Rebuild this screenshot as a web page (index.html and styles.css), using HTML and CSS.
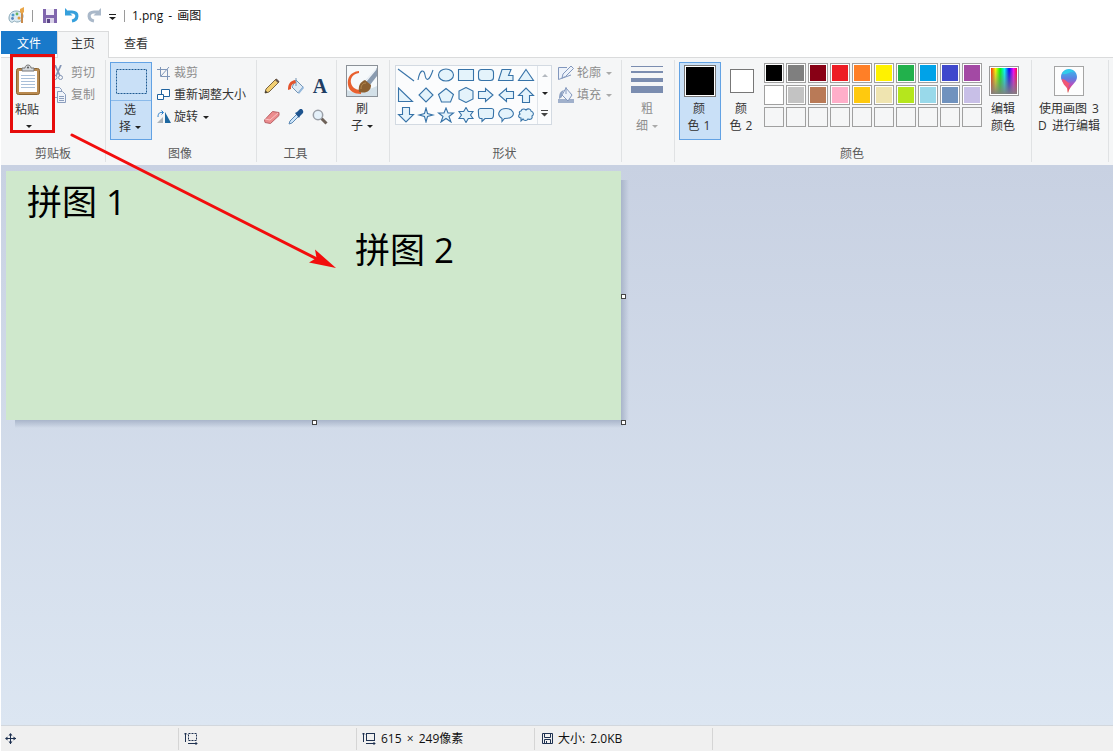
FILE: index.html
```html
<!DOCTYPE html>
<html lang="zh-CN">

<head>
    <meta charset="UTF-8">
    <meta name="viewport" content="width=device-width, initial-scale=1.0">
    <title>1.png - 画图</title>
    <link rel="stylesheet" href="styles.css">
</head>

<body>
    <div class="window">
        <div class="titlebar">
            <svg class="logo" width="18" height="18" viewBox="0 0 18 18">
                <path d="M8 4C3 4 1 8 1 11s2 5 4 4c2-2 2 0 4 0 4 0 6-3 6-6S12 4 8 4z" fill="#dcebf3" stroke="#85a5b5" />
                <circle cx="5" cy="8" r="1.5" fill="#4f9ccc" />
                <circle cx="9" cy="7" r="1.4" fill="#65b35e" />
                <circle cx="4.5" cy="11.5" r="1.4" fill="#5a84bd" />
                <circle cx="11" cy="11" r="1.5" fill="#e19a3c" />
                <path d="M14 6v10" stroke="#c98b4c" stroke-width="2" />
                <path d="M12 2l2-1 2-1v5l-2 2-2-2z" fill="#e9a649" />
            </svg>
            <i class="bar"></i>
            <svg class="save" width="14" height="14" viewBox="0 0 14 14">
                <path d="M0 0h14v14H0z" fill="#8066ad" />
                <path d="M3 0h8v6H3z" fill="#f2eff8" />
                <path d="M3 9h8v5H3z" fill="#d9d2e8" />
                <path d="M4 10h3v4H4z" fill="#5b4687" />
            </svg>
            <svg class="undo" width="14" height="15" viewBox="0 0 14 15">
                <path d="M3 4h4c7 0 6 8 0 9" fill="none" stroke="#36a0dc" stroke-width="3.2" />
                <path d="M0 0v7.500h7.500z" fill="#36a0dc" />
            </svg>
            <svg class="redo" width="14" height="15" viewBox="0 0 14 15">
                <path d="M11 4H7C0 4 1 12 7 13" fill="none" stroke="#a9b8c9" stroke-width="3.200" />
                <path d="M14 0v7.500H6.500z" fill="#a9b8c9" />
            </svg>
            <svg class="more" width="7" height="6" viewBox="0 0 7 6">
                <path d="M0 0h7v1H0zM0 3h7L3.500 6z" fill="#222" />
            </svg>
            <i class="bar"></i>
            <span class="title">1.png - 画图</span>
        </div>

        <div class="tabs">
            <div class="tab file">文件</div>
            <div class="tab active">主页</div>
            <div class="tab">查看</div>
        </div>

        <div class="ribbon">
            <div class="group clipboard">
                <div class="tools">
                    <div class="big paste">
                        <svg width="26" height="33" viewBox="0 0 26 33">
                            <rect x="1.500" y="4.500" width="23" height="26" rx="2" fill="#b98a50" stroke="#8d642f" />
                            <path d="M4 7h18v21H4z" fill="#fff" />
                            <path d="M6 11.500h14M6 14.500h14M6 17.500h14M6 20.500h14M6 23.500h14" stroke="#a9bfd8" />
                            <path d="M7 7V4h3c0-4 6-4 6 0h3v3z" fill="#d5d8dc" stroke="#777" />
                            <circle cx="13" cy="3.500" r="1" fill="#555" />
                        </svg>
                        <span>粘贴</span>
                        <b class="caret"></b>
                    </div>
                    <ul class="rows">
                        <li class="off">
                            <svg width="16" height="16" viewBox="0 0 16 16" fill="none" stroke="#8495b5">
                                <path d="M3 0l5 11M9 0L4 11" stroke-width="1.800" />
                                <circle cx="3" cy="12.500" r="2" />
                                <circle cx="8.500" cy="12.500" r="2" />
                            </svg>剪切
                        </li>
                        <li class="off">
                            <svg width="16" height="16" viewBox="0 0 16 16" fill="#f0f4fa" stroke="#8b9dbd">
                                <path d="M2.500 .5h5l2 2v8h-7z" />
                                <path d="M5.500 4.500h5l3 3v8h-8z" />
                                <path d="M7 9.500h5M7 11.500h5M7 13.500h5" />
                            </svg>复制
                        </li>
                    </ul>
                </div>
                <div class="label">剪贴板</div>
            </div>

            <div class="group image">
                <div class="tools">
                    <div class="big select on">
                        <div class="half">
                            <svg width="31" height="25" viewBox="0 0 31 25">
                                <rect x=".5" y=".5" width="30" height="24" fill="none" stroke="#1f5a91" stroke-dasharray="2 1" />
                            </svg>
                        </div>
                        <span>选</span>
                        <span>择<b class="caret"></b></span>
                    </div>
                    <ul class="rows">
                        <li class="off">
                            <svg width="14" height="14" viewBox="0 0 14 14" fill="none" stroke="#7f96b8">
                                <path d="M3.500 1v9.500H13M0 3.500h10.500V14M4 10l8-9" />
                            </svg>裁剪
                        </li>
                        <li>
                            <svg width="14" height="14" viewBox="0 0 14 14" fill="#fff" stroke="#20639f">
                                <path d="M4.500 1.500h8v7h-8z" />
                                <path d="M.5 6.500h6v5h-6z" />
                            </svg>重新调整大小
                        </li>
                        <li>
                            <svg width="14" height="14" viewBox="0 0 14 14">
                                <path d="M0 13h6V7z" fill="#aeb4ba" />
                                <path d="M8 2v11h6z" fill="#1d67a0" />
                                <path d="M1 7c0-4 2-5 5-4.500M4.500 .5l2 2-2 2" fill="none" stroke="#2c7fca" />
                            </svg>旋转<b class="caret"></b>
                        </li>
                    </ul>
                </div>
                <div class="label">图像</div>
            </div>

            <div class="group kit">
                <div class="tools">
                    <svg viewBox="0 0 16 16">
                        <path d="M1 15l1-4L12 1l3 3L5 14z" fill="#f2cf72" stroke="#7a6441" />
                        <path d="M11 2l1.500-1.500 3 3L14 5z" fill="#69564a" />
                        <path d="M1 15l.6-2.500 2 2z" fill="#333" />
                    </svg>
                    <svg viewBox="0 0 16 16">
                        <path d="M8 2l7 7-5 6-6-6z" fill="#dfeaf5" stroke="#7293b4" />
                        <path d="M8 8L8 0" stroke="#7293b4" fill="none" />
                        <path d="M7 2C2 3 0 6 0 12l3-1c0-4 1-5 5-6z" fill="#e3532d" />
                        <path d="M10 15l5-7 1 2-5 6z" fill="#94b8dc" />
                    </svg>
                    <span class="letter">A</span>
                    <svg viewBox="0 0 16 16">
                        <path d="M.5 11l8-8.500 6.500 1v3l-8.500 8-5.500-1z" fill="#ec8c8e" stroke="#b96368" />
                        <path d="M1 10l5 1 8-7" fill="none" stroke="#f9c2c2" />
                    </svg>
                    <svg viewBox="0 0 16 16">
                        <path d="M1 15l1-3 7-7 2 2-7 7z" fill="#cfe6fa" stroke="#5c88b3" />
                        <path d="M7 4l2-1 3-3c2-1 4 2 3 4l-3 3-1 2z" fill="#1e548f" />
                    </svg>
                    <svg viewBox="0 0 16 16">
                        <path d="M9.500 9.500l5 5" stroke="#6e6259" stroke-width="3" />
                        <circle cx="6" cy="6" r="4.700" fill="#e5f1fa" stroke="#9a9fa7" stroke-width="1.500" />
                    </svg>
                </div>
                <div class="label">工具</div>
            </div>

            <div class="group brush">
                <div class="tools">
                    <div class="big">
                        <svg width="32" height="32" viewBox="0 0 32 32">
                            <rect x=".5" y=".5" width="31" height="31" fill="#f6f9fb" stroke="#8b9198" />
                            <path d="M1 31V25l11 4 19-8v10z" fill="#d3e0e8" />
                            <path d="M13 6C4 7 1 13 2 20c1 6 6 9 13 9v-4c-6 0-9-3-10-7-1-5 2-9 8-10z" fill="#e8602f" />
                            <path d="M31 3v8L24 20l-5-4z" fill="#8a9bb0" />
                            <path d="M30 4L20 16" stroke="#eef3f8" stroke-width="1.500" />
                            <path d="M19 15l6 5c0 6-5 9-12 7-1-6 1-10 6-12z" fill="#8b5f30" />
                            <path d="M15 24c0-4 2-6 5-6" fill="none" stroke="#b58a50" />
                        </svg>
                        <span>刷</span>
                        <span>子<b class="caret"></b></span>
                    </div>
                </div>
            </div>

            <div class="group shapes">
                <div class="tools">
                    <div class="gallery">
                        <div class="shape-list">
                            <svg viewBox="0 0 18 16"><path d="M1 2l16 12" /></svg>
                            <svg viewBox="0 0 18 16"><path d="M1 13C3 2 7 2 8 8s4 7 8-5" /></svg>
                            <svg viewBox="0 0 18 16"><ellipse cx="9" cy="8" rx="7.500" ry="6" /></svg>
                            <svg viewBox="0 0 18 16"><path d="M1.500 2.500h15v11h-15z" /></svg>
                            <svg viewBox="0 0 18 16"><rect x="1.500" y="2.500" width="15" height="11" rx="3" /></svg>
                            <svg viewBox="0 0 18 16"><path d="M5 2.500h9l-2.500 6H16v5H1.500z" /></svg>
                            <svg viewBox="0 0 18 16"><path d="M9 2.500l7.500 11h-15z" /></svg>
                            <svg viewBox="0 0 18 16"><path d="M1.500 1v13.500h14z" /></svg>
                            <svg viewBox="0 0 18 16"><path d="M9 1l7 7-7 7-7-7z" /></svg>
                            <svg viewBox="0 0 18 16"><path d="M9 1.500l7.500 6-3 7.500h-9l-3-7.500z" /></svg>
                            <svg viewBox="0 0 18 16"><path d="M9 .5L16 4v8l-7 3.500L2 12V4z" /></svg>
                            <svg viewBox="0 0 18 16"><path d="M1.500 4.500h7v-3L16 8l-7.500 6.500v-3h-7z" /></svg>
                            <svg viewBox="0 0 18 16"><path d="M16.500 4.500h-7v-3L2 8l7.500 6.500v-3h7z" /></svg>
                            <svg viewBox="0 0 18 16"><path d="M5.500 15.500v-7h-4L9 1l7.500 7.500h-4v7z" /></svg>
                            <svg viewBox="0 0 18 16"><path d="M5.500 .5v7h-4L9 15l7.500-7.500h-4v-7z" /></svg>
                            <svg viewBox="0 0 18 16"><path d="M9 1l1.500 5.500L16 8l-5.500 1.500L9 15 7.500 9.500 2 8l5.500-1.500z" /></svg>
                            <svg viewBox="0 0 18 16"><path d="M9 1l2 5h5.500l-4.500 3.500 2 5.500-5-3.500L4 15l2-5.500L1.500 6H7z" /></svg>
                            <svg viewBox="0 0 18 16"><path d="M9 .5l2.300 4H16L13.500 8l2.500 3.500h-4.700l-2.300 4-2.300-4H2L4.500 8 2 4.500h4.700z" /></svg>
                            <svg viewBox="0 0 18 16"><path d="M3.500 1.500h11c3 0 2 3 2 5s0 5-2 5H8L5 14.500v-3H3.500c-2 0-2-3-2-5s-1-5 2-5z" /></svg>
                            <svg viewBox="0 0 18 16"><path d="M5 11.500C-1 8 2 1.500 9 1.500s10 6.500 4.500 9c-2 1-4 1-6 1L5 14.500z" /></svg>
                            <svg viewBox="0 0 18 16"><path d="M4 4c1-3 4-2 5-1 2-2 5-1 5 1 3 1 3 4 1 5 1 3-2 4-4 3-1 2-4 2-5 0l-2 2v-3C1 11 1 8 3 7c-1-1-1-3 1-3z" /></svg>
                        </div>
                        <div class="scroll">
                            <b class="up"></b>
                            <b class="caret"></b>
                            <svg width="7" height="7" viewBox="0 0 7 7">
                                <path d="M0 0h7v1H0zM0 3h7L3.500 6.500z" fill="#444" />
                            </svg>
                        </div>
                    </div>
                    <ul class="rows">
                        <li class="off">
                            <svg width="16" height="16" viewBox="0 0 16 16" fill="#edf2fa" stroke="#8297bd">
                                <path d="M9 2.500H.5v12L13 10" />
                                <path d="M4 13l1-4 8-8 2.500 2.500-8 8z" />
                            </svg>轮廓<b class="caret"></b>
                        </li>
                        <li class="off">
                            <svg width="16" height="16" viewBox="0 0 16 16">
                                <path d="M0 12h16v4H0z" fill="#a0b0cb" />
                                <path d="M8 1l6 7-4 6-6-6z" fill="#edf2fa" stroke="#8297bd" />
                                <path d="M8 7V0" stroke="#8297bd" />
                                <path d="M6 3C2 4 1 7 1 12l3-2V7z" fill="#8ea2c3" />
                            </svg>填充<b class="caret"></b>
                        </li>
                    </ul>
                </div>
                <div class="label">形状</div>
            </div>

            <div class="group size">
                <div class="tools">
                    <div class="big off">
                        <svg width="32" height="32" viewBox="0 0 32 32">
                            <path d="M0 1h32v1H0zM0 6h32v2H0zM0 13h32v4H0zM0 21h32v7H0z" fill="#7b8db0" />
                        </svg>
                        <span>粗</span>
                        <span>细<b class="caret"></b></span>
                    </div>
                </div>
            </div>

            <div class="group colors">
                <div class="tools">
                    <div class="big on">
                        <i class="color one"></i>
                        <span>颜</span>
                        <span>色 1</span>
                    </div>
                    <div class="big">
                        <i class="color two"></i>
                        <span>颜</span>
                        <span>色 2</span>
                    </div>
                    <div class="palette"></div>
                    <div class="big edit">
                        <i class="spectrum"></i>
                        <span>编辑</span>
                        <span>颜色</span>
                    </div>
                </div>
                <div class="label">颜色</div>
            </div>

            <div class="group paint3d">
                <div class="tools">
                    <div class="big">
                        <svg width="30" height="30" viewBox="0 0 30 30">
                            <defs>
                                <linearGradient id="drop" x1="0" y1="0" x2="0" y2="1">
                                    <stop offset="0" stop-color="#35c0ee" />
                                    <stop offset=".4" stop-color="#5f7fe0" />
                                    <stop offset=".65" stop-color="#b64fc0" />
                                    <stop offset=".85" stop-color="#ee4a58" />
                                    <stop offset="1" stop-color="#c4341c" />
                                </linearGradient>
                            </defs>
                            <rect x=".5" y=".5" width="29" height="29" fill="#fdfdfd" stroke="#a5a5a5" />
                            <path d="M15 3c5 0 8 4 8 8 0 6-7 8-9 16-1-3 0-5-2-8-2-2-5-4-5-8 0-5 4-8 8-8z" fill="url(#drop)" />
                            <path d="M8 8c2-5 9-6 12-2-4-1-6 3-12 2z" fill="#31cdea" />
                            <path d="M8 13c4 0 5 4 8 4-2 3-2 4-2 8 0-4-6-6-6-12z" fill="#f05575" />
                        </svg>
                        <span>使用画图 3</span>
                        <span>D 进行编辑</span>
                    </div>
                </div>
            </div>
        </div>

        <div class="workspace">
            <div class="canvas">
                <span class="piece first">拼图 1</span>
                <span class="piece second">拼图 2</span>
                <i class="handle right"></i>
                <i class="handle bottom"></i>
                <i class="handle corner"></i>
            </div>
        </div>

        <div class="status">
            <div class="cell move">
                <svg width="12" height="12" viewBox="0 0 12 12">
                    <path d="M5.500 1v10M1 5.500h10" stroke="#1e3150" />
                    <path d="M5.500 0l2 2.500h-4zM5.500 11l2-2.500h-4zM0 5.500l2.500-2v4zM11 5.500l-2.500-2v4z" fill="#1e3150" />
                </svg>
            </div>
            <div class="cell">
                <svg width="14" height="13" viewBox="0 0 14 13" fill="none" stroke="#1e3150">
                    <rect x="4.500" y="1.500" width="8" height="7" stroke-dasharray="2 1" />
                    <path d="M1.500 10V1M0 2.500L1.500 1 3 2.500M4 11.500h9M11.500 10l1.500 1.500-1.500 1.500" />
                </svg>
            </div>
            <div class="cell">
                <svg width="14" height="13" viewBox="0 0 14 13" fill="none" stroke="#1e3150">
                    <rect x="4.500" y="1.500" width="8" height="7" />
                    <path d="M1.500 10V1M0 2.500L1.500 1 3 2.500M4 11.500h9M11.500 10l1.500 1.500-1.500 1.500" />
                </svg>
                <span>615 × 249像素</span>
            </div>
            <div class="cell disk">
                <svg width="11" height="11" viewBox="0 0 11 11" fill="none" stroke="#1e3150">
                    <path d="M.5 .5h10v10H.5zM2.500 .5v4h6v-4M2.500 10.500v-4h6v4M4.500 8v2" />
                </svg>
                <span>大小: 2.0KB</span>
            </div>
        </div>

        <!-- 标注 -->
        <div class="mark-box"></div>
        <svg class="mark-arrow" width="268" height="138" viewBox="0 0 268 138">
            <path d="M3 3l247 125" stroke="#f20d0d" stroke-width="3" stroke-linecap="round" />
            <path d="M267 136l-27-5.500 7.500-4.500-1.500-8.500z" fill="#f20d0d" />
        </svg>
    </div>
    <script>
        var colors = [
            '#000000', '#7f7f7f', '#880015', '#ed1c24', '#ff7f27', '#fff200', '#22b14c', '#00a2e8', '#3f48cc', '#a349a4',
            '#ffffff', '#c3c3c3', '#b97a57', '#ffaec9', '#ffc90e', '#efe4b0', '#b5e61d', '#99d9ea', '#7092be', '#c8bfe7'
        ];
        var palette = document.querySelector('.palette');
        var html = '';
        for (var i = 0; i < 30; i++) {
            if (colors[i]) {
                html += `<i class="swatch" style="background-color: ${colors[i]}"></i>`;
            } else {
                html += `<i class="swatch empty"></i>`;
            }
        }
        palette.innerHTML = html;
    </script>
</body>

</html>
```
FILE: styles.css
```css
* {
    box-sizing: border-box;
}

body {
    margin: 0;
    background-color: #fff;
    color: #333;
    font-family: "Open Sans", "Noto Sans CJK SC", sans-serif;
    font-size: 12px;
    overflow: hidden;
}

ul {
    list-style: none;
    margin: 0;
    padding: 0;
}

svg {
    display: block;
    flex: none;
}

.window {
    position: relative;
    display: flex;
    flex-direction: column;
    width: 1113px;
    height: 751px;
    padding-left: 1px;
}

/* 标题栏 */
.titlebar {
    display: flex;
    align-items: center;
    height: 31px;
    padding-left: 7px;
    color: #111;
}

.bar {
    width: 1px;
    height: 12px;
    background-color: #9a9a9a;
}

.logo {
    margin-right: 6px;
}

.save {
    margin-left: 10px;
}

.undo {
    margin-left: 8px;
}

.redo {
    margin-left: 8px;
}

.more {
    margin: 3px 8px 0 8px;
}

.title {
    margin-left: 7px;
    margin-bottom: 2px;
    word-spacing: 2px;
}

/* 选项卡 */
.tabs {
    display: flex;
    height: 27px;
    border-bottom: 1px solid #dadbdc;
}

.tab {
    width: 54px;
    height: 26px;
    line-height: 25px;
    text-align: center;
}

.tab.file {
    width: 56px;
    height: 23px;
    background-color: #1979ca;
    color: #fff;
}

.tab.active {
    width: 52px;
    height: 27px;
    background-color: #f5f6f7;
    border: 1px solid #dadbdc;
    border-bottom: 0;
    line-height: 24px;
}

/* 功能区 */
.ribbon {
    display: flex;
    height: 107px;
    background-color: #f5f6f7;
}

.group {
    flex: none;
    height: 107px;
    background: linear-gradient(#e0e2e4, #e0e2e4) right 2px / 1px 102px no-repeat;
}

.tools {
    display: flex;
    height: 88px;
    padding-top: 4px;
}

.label {
    height: 16px;
    line-height: 16px;
    padding-right: 3px;
    text-align: center;
    color: #5a5a5a;
}

.big {
    display: flex;
    flex-direction: column;
    align-items: center;
    flex: none;
    width: 42px;
    height: 78px;
    padding-top: 3px;
    line-height: 17px;
    white-space: nowrap;
}

.big > svg {
    margin-bottom: 3px;
}

.big.on {
    background-color: #c9e0f7;
    border: 1px solid #62a2e4;
    padding-top: 2px;
}

.off {
    color: #8d8d8d;
}

.caret {
    display: inline-block;
    border: 3px solid transparent;
    border-top-color: #222;
    border-bottom: 0;
    margin-left: 4px;
    vertical-align: 2px;
}

.off .caret {
    border-top-color: #aaa;
}

.rows li {
    display: flex;
    align-items: center;
    height: 22px;
    line-height: 22px;
    white-space: nowrap;
}

.clipboard {
    width: 105px;
}

.clipboard .label {
    padding-right: 1px;
}

.paste {
    width: 38px;
    margin-left: 8px;
    padding-top: 2px;
}

.paste .caret {
    margin: 7px 0 0 2px;
}

.paste span {
    margin-top: 1px;
    margin-right: 2px;
}

.clipboard .rows {
    margin-left: 5px;
}

.clipboard .rows svg {
    margin-right: 3px;
}

.image {
    width: 151px;
}

.image .tools {
    padding-left: 4px;
}

.select.on {
    padding: 0;
}

.select span {
    margin-right: 2px;
}

.half {
    display: flex;
    align-items: center;
    justify-content: center;
    width: 40px;
    height: 38px;
    border-bottom: 1px solid #8abaea;
}

.image .rows {
    margin-left: 5px;
}

.image .rows svg {
    margin-right: 3px;
}

.image .rows .caret {
    margin-left: 5px;
}

.kit {
    width: 80px;
}

.kit .tools {
    display: grid;
    grid-template-columns: repeat(3, 24px);
    grid-template-rows: 31px 31px;
    place-items: center;
    padding: 12px 0 0 3px;
}

.kit svg {
    width: 16px;
    height: 16px;
}

.letter {
    color: #1f3d63;
    font: bold 20px/16px "Liberation Serif", serif;
}

.brush {
    width: 53px;
}

.brush .tools,
.size .tools {
    padding-left: 4px;
}

.shapes {
    width: 232px;
}

.shapes .tools {
    padding-left: 5px;
}

.gallery {
    display: flex;
    width: 157px;
    height: 60px;
    margin-top: 3px;
    border: 1px solid #d3dae2;
    background-color: #fbfcfd;
}

.shape-list {
    display: grid;
    grid-template-columns: repeat(7, 20px);
    grid-template-rows: repeat(3, 20px);
    place-items: center;
    width: 141px;
    height: 58px;
    align-content: center;
}

.shape-list svg {
    width: 18px;
    height: 16px;
    fill: #e4f3fb;
    stroke: #3773a8;
    stroke-width: 1.1;
}

.shape-list svg:nth-child(-n+2) {
    fill: none;
}

.scroll {
    display: flex;
    flex-direction: column;
    align-items: center;
    justify-content: space-around;
    width: 14px;
    border-left: 1px solid #dfe4ea;
}

.scroll .caret {
    margin: 0;
}

.up {
    border: 3px solid transparent;
    border-bottom-color: #b4b9c0;
    border-top: 0;
}

.shapes .rows {
    margin-left: 6px;
}

.shapes .rows svg {
    margin-right: 3px;
}

.rows .caret {
    margin-left: 5px;
}

.size {
    width: 53px;
}

.colors {
    width: 357px;
}

.colors .tools {
    padding-left: 4px;
}

.color {
    width: 32px;
    height: 32px;
    border: 1px solid #777;
    padding: 1px;
    margin-bottom: 3px;
    background-color: #fff;
}

.one {
    background: #000 content-box;
    box-shadow: inset 0 0 0 1px #fff;
}

.two {
    width: 24px;
    height: 24px;
    margin: 4px 0 7px;
}

.color ~ span {
    margin-right: 2px;
    word-spacing: 1px;
}

.palette {
    display: grid;
    grid-template-columns: repeat(10, 20px);
    grid-template-rows: repeat(3, 20px);
    gap: 2px;
    margin: 1px 0 0 1px;
    height: 64px;
}

.swatch {
    border: 1px solid #a0a0a0;
    box-shadow: inset 0 0 0 1px #fff;
}

.swatch.empty {
    box-shadow: none;
}

.edit {
    margin-left: 1px;
    padding-top: 4px;
}

.edit span {
    margin-right: 2px;
}

.spectrum {
    width: 30px;
    height: 30px;
    margin-bottom: 4px;
    border: 1px solid #999;
    box-shadow: inset 0 0 0 1px #fff;
    background: linear-gradient(rgba(128, 128, 128, 0), #808080), linear-gradient(90deg, #f00, #ff0 20%, #0f0 36%, #0ff 52%, #00f 68%, #f0f 84%, #f00);
}

.paint3d {
    width: 77px;
}

.paint3d .big {
    width: 74px;
    padding-top: 4px;
    word-spacing: 2px;
}

.paint3d .big > svg {
    margin-bottom: 4px;
}

/* 画布 */
.workspace {
    flex: 1;
    padding: 6px 0 0 5px;
    background: linear-gradient(#c8d1e2, #dce6f2);
}

.canvas {
    position: relative;
    width: 615px;
    height: 249px;
    background-color: #cfe8cc;
}

.canvas::before,
.canvas::after {
    content: "";
    position: absolute;
}

.canvas::before {
    left: 615px;
    top: 9px;
    width: 8px;
    height: 240px;
    background: linear-gradient(90deg, #a9b5ca, rgba(169, 181, 202, 0));
}

.canvas::after {
    left: 9px;
    top: 249px;
    width: 608px;
    height: 8px;
    background: linear-gradient(#a9b5ca, rgba(169, 181, 202, 0));
}

.piece {
    position: absolute;
    color: #000;
    font: 35px/48px "Open Sans", "Noto Sans CJK SC", sans-serif;
    white-space: nowrap;
}

.first {
    left: 21px;
    top: 7px;
}

.second {
    left: 349px;
    top: 55px;
}

.handle {
    position: absolute;
    z-index: 1;
    width: 5px;
    height: 5px;
    border: 1px solid #444;
    background-color: #fff;
}

.handle.right {
    left: 615px;
    top: 123px;
}

.handle.bottom {
    left: 306px;
    top: 249px;
}

.handle.corner {
    left: 615px;
    top: 249px;
}

/* 状态栏 */
.status {
    display: flex;
    height: 26px;
    border-top: 1px solid #d2d7dd;
    background-color: #f0f0f0;
    color: #111;
}

.cell {
    display: flex;
    align-items: center;
    width: 178px;
    padding-left: 5px;
    background: linear-gradient(#d5d5d5, #d5d5d5) right 2px / 1px 22px no-repeat;
}

.cell span {
    margin-left: 5px;
    margin-bottom: 2px;
    word-spacing: 2px;
}

.move {
    padding-left: 4px;
}

.disk {
    padding-left: 7px;
}

/* 标注 */
.mark-box {
    position: absolute;
    left: 10px;
    top: 54px;
    width: 45px;
    height: 79px;
    border: 3px solid #e60c0c;
}

.mark-arrow {
    position: absolute;
    left: 69px;
    top: 132px;
}
```
